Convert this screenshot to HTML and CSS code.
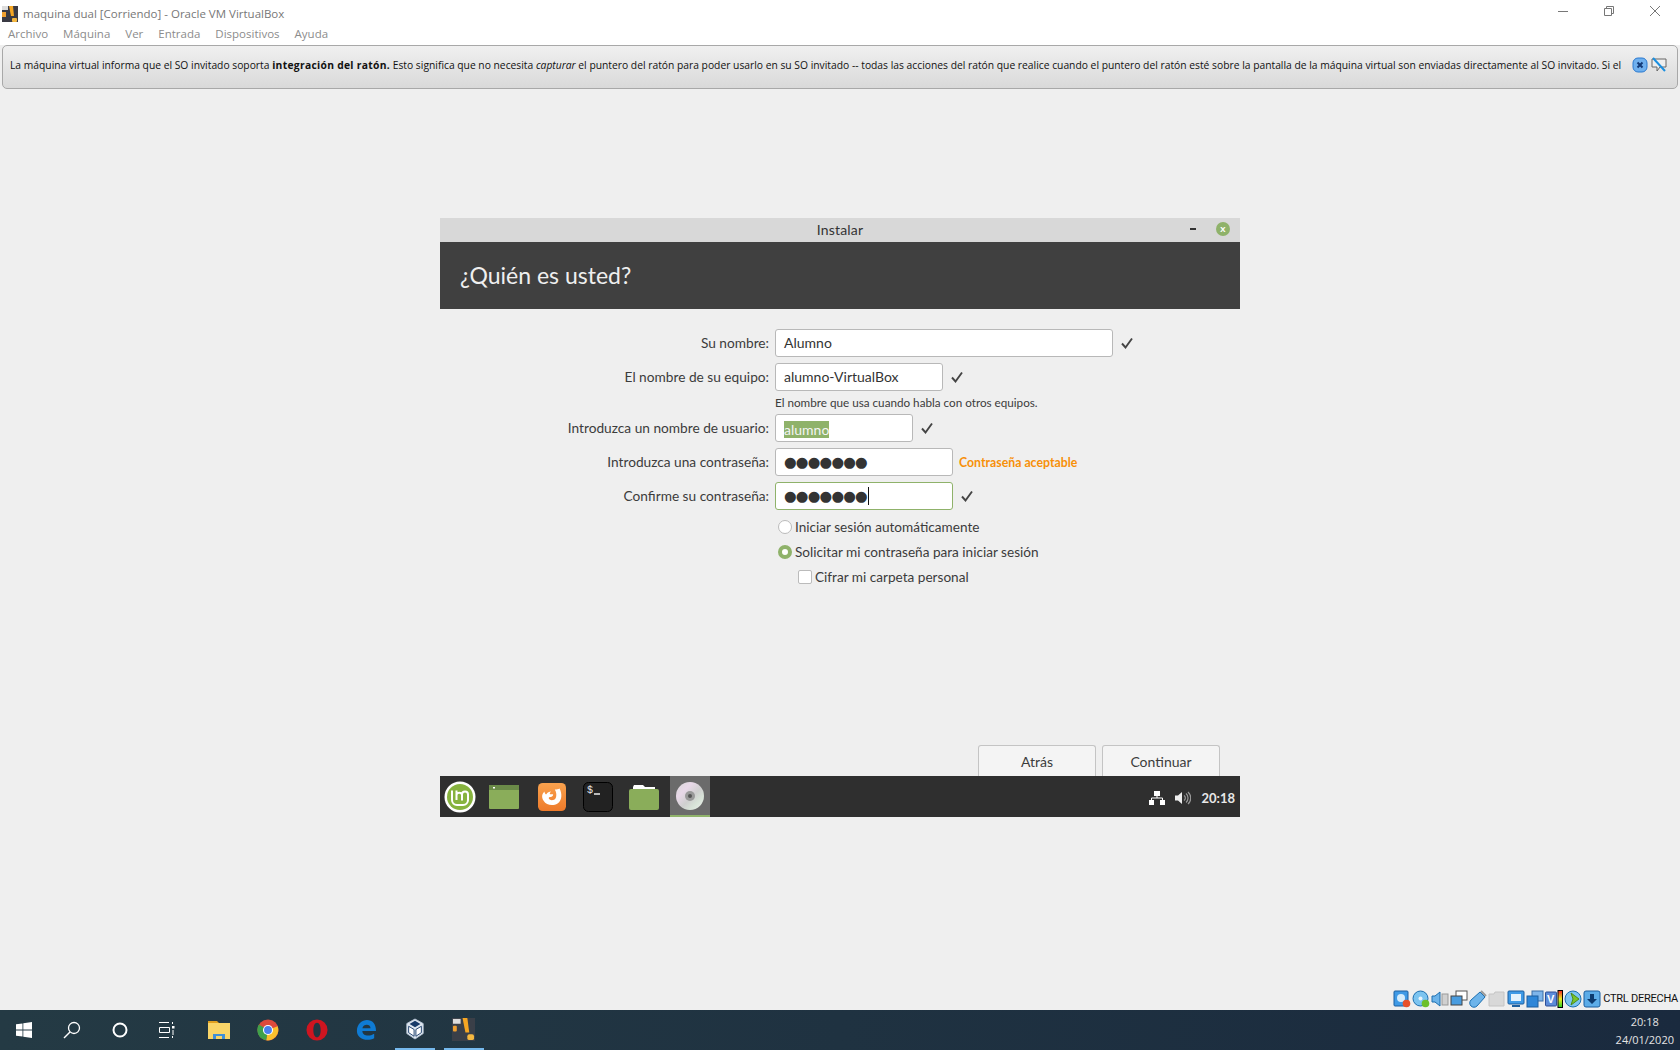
FILE: index.html
```html
<!DOCTYPE html>
<html lang="es">
<head>
  <meta charset="UTF-8" />
  <title>maquina dual [Corriendo] - Oracle VM VirtualBox</title>
  <link rel="stylesheet" href="styles.css">
</head>
<body>
  <div class="titlebar">
    <svg class="app-icon" viewBox="0 0 16 16" width="16" height="16">
      <rect width="16" height="16" fill="#3a3a44"/>
      <rect x="0" y="0" width="6" height="4" fill="#ddd"/>
      <rect x="0" y="6" width="4" height="5" fill="#f0a030"/>
      <path d="M7 0h4l1 10h-3z" fill="#f5a623"/>
      <rect x="10" y="12" width="5" height="4" rx="1" fill="#f5b840"/>
    </svg>
    <span class="app-title">maquina dual [Corriendo] - Oracle VM VirtualBox</span>
    <div class="win-controls">
      <svg viewBox="0 0 46 22" width="46" height="22"><path d="M18 11.5h10" stroke="#777" fill="none"/></svg>
      <svg viewBox="0 0 46 22" width="46" height="22"><path d="M18.5 8.5h7v7h-7zM20.5 8.5v-2h7v7h-2" stroke="#777" fill="none"/></svg>
      <svg viewBox="0 0 46 22" width="46" height="22"><path d="M18 6l10 10M28 6l-10 10" stroke="#777" fill="none"/></svg>
    </div>
  </div>

  <div class="menubar">
    <span>Archivo</span>
    <span>Máquina</span>
    <span>Ver</span>
    <span>Entrada</span>
    <span>Dispositivos</span>
    <span>Ayuda</span>
  </div>

  <div class="notice">
    <p>La máquina virtual informa que el SO invitado soporta <strong>integración del ratón.</strong> Esto significa que no necesita <em>capturar</em> el puntero del ratón para poder usarlo en su SO invitado -- todas las acciones del ratón que realice cuando el puntero del ratón esté sobre la pantalla de la máquina virtual son enviadas directamente al SO invitado. Si el</p>
    <svg viewBox="0 0 16 16" width="16" height="16">
      <rect x="1" y="1" width="14" height="14" rx="5" fill="#6fb0ee" stroke="#2b7ad0"/>
      <path d="M5.5 5.5l5 5M10.5 5.5l-5 5" stroke="#123a78" stroke-width="2"/>
    </svg>
    <svg viewBox="0 0 18 16" width="18" height="16">
      <path d="M2 2h14v8h-6l-3 4v-4h-5z" fill="#eee" stroke="#666"/>
      <path d="M3 1l12 13" stroke="#1a8fe0" stroke-width="2"/>
    </svg>
  </div>

  <main class="desktop">
    <section class="dialog">
      <div class="dialog-title">
        <span>Instalar</span>
        <div class="dialog-controls">
          <i class="minimize"></i>
          <b class="close-btn">x</b>
        </div>
      </div>
      <h1 class="dialog-header">¿Quién es usted?</h1>

      <div class="dialog-body">
        <div class="form">
          <label>Su nombre:</label>
          <div class="field">
            <div class="entry entry-name">Alumno</div>
            <svg class="tick" viewBox="0 0 14 14" width="14" height="14"><path d="M2 7.5l3.5 4L12 2.5" stroke="#444" stroke-width="1.9" fill="none"/></svg>
          </div>

          <label>El nombre de su equipo:</label>
          <div class="field">
            <div class="entry entry-host">alumno-VirtualBox</div>
            <svg class="tick" viewBox="0 0 14 14" width="14" height="14"><path d="M2 7.5l3.5 4L12 2.5" stroke="#444" stroke-width="1.9" fill="none"/></svg>
          </div>

          <p class="hint">El nombre que usa cuando habla con otros equipos.</p>

          <label>Introduzca un nombre de usuario:</label>
          <div class="field">
            <div class="entry entry-user"><span class="selected">alumno</span></div>
            <svg class="tick" viewBox="0 0 14 14" width="14" height="14"><path d="M2 7.5l3.5 4L12 2.5" stroke="#444" stroke-width="1.9" fill="none"/></svg>
          </div>

          <label>Introduzca una contraseña:</label>
          <div class="field">
            <div class="entry entry-pass dots">●●●●●●●</div>
            <span class="strength">Contraseña aceptable</span>
          </div>

          <label>Confirme su contraseña:</label>
          <div class="field">
            <div class="entry entry-pass focused dots">●●●●●●●<span class="caret"></span></div>
            <svg class="tick" viewBox="0 0 14 14" width="14" height="14"><path d="M2 7.5l3.5 4L12 2.5" stroke="#444" stroke-width="1.9" fill="none"/></svg>
          </div>
        </div>

        <div class="options">
          <div class="option"><i class="radio"></i>Iniciar sesión automáticamente</div>
          <div class="option"><i class="radio checked"></i>Solicitar mi contraseña para iniciar sesión</div>
          <div class="option sub"><i class="checkbox"></i>Cifrar mi carpeta personal</div>
        </div>

        <div class="buttons">
          <button>Atrás</button>
          <button>Continuar</button>
        </div>
      </div>

      <div class="panel">
        <div class="launcher">
          <svg viewBox="0 0 32 32" width="32" height="32">
            <circle cx="16" cy="16" r="15.5" fill="#fff"/>
            <circle cx="16" cy="16" r="13" fill="#87b33f"/>
            <path d="M8 9.500v9.500a5 5 0 0 0 5 5h6a5 5 0 0 0 5-5v-5.500a3 3 0 0 0-6 0v6M12.500 9.500v9.500M12.500 13.500a3 3 0 0 1 5.500 0" fill="none" stroke="#fff" stroke-width="2"/>
          </svg>
          <svg viewBox="0 0 30 24" width="30" height="24">
            <rect width="30" height="24" rx="1" fill="#8aad5a"/>
            <rect width="30" height="5" fill="#6b8a48"/>
            <rect x="4" y="2" width="2" height="1.500" fill="#fff"/>
          </svg>
          <svg viewBox="0 0 30 30" width="28" height="28">
            <defs><linearGradient id="ff" x1="0" y1="0" x2="0" y2="1"><stop offset="0" stop-color="#f9a24e"/><stop offset="1" stop-color="#ee7a2a"/></linearGradient></defs>
            <rect width="30" height="30" rx="5" fill="url(#ff)"/>
            <path d="M23 6c3 5 3 13-2 16s-12 2-15-3-1-8 1-10c0 2 1 3 2 3 1-2 3-3 5-3-1 1-2 2-1 3h3c1 1-1 3-3 3s-2 2 0 3 5 0 6-2 1-6-1-9c2 0 4 0 5-1z" fill="#fff"/>
          </svg>
          <svg viewBox="0 0 30 30" width="30" height="30">
            <rect x="0.500" y="0.500" width="29" height="29" rx="5" fill="#222" stroke="#000"/>
            <text x="4" y="11" class="term-text">$</text>
            <path d="M11 12h6" stroke="#eee" stroke-width="1.500"/>
          </svg>
          <svg viewBox="0 0 30 26" width="30" height="26">
            <path d="M4 3l1-2h9l2 2h10v4H4z" fill="#fff"/>
            <rect y="5" width="30" height="21" rx="2" fill="#8aad5a"/>
          </svg>
          <div class="launcher-active">
            <svg viewBox="0 0 28 28" width="28" height="28">
              <defs><linearGradient id="cd" x1="0" y1="0" x2="1" y2="1"><stop offset="0" stop-color="#d8d8d8"/><stop offset="0.3" stop-color="#e8d8e8"/><stop offset="0.55" stop-color="#cfcfcf"/><stop offset="0.75" stop-color="#d8e4d8"/><stop offset="1" stop-color="#eee"/></linearGradient></defs>
              <circle cx="14" cy="14" r="14" fill="url(#cd)"/>
              <circle cx="14" cy="14" r="5" fill="#999"/>
              <circle cx="14" cy="14" r="2" fill="#555"/>
            </svg>
          </div>
        </div>
        <div class="tray">
          <svg viewBox="0 0 16 14" width="16" height="14">
            <path d="M5 0h6v5H5zM0 9h5v5H0zM11 9h5v5h-5z" fill="#fff"/>
            <path d="M8 5v2M2.500 9V7h11v2" stroke="#fff" fill="none"/>
          </svg>
          <svg viewBox="0 0 16 14" width="16" height="14">
            <path d="M0 4.500h3L7 1v12L3 9.500H0z" fill="#eee"/>
            <path d="M9 4.500a3 3 0 0 1 0 5M11 2.500a6 6 0 0 1 0 9M13 1a8 8 0 0 1 0 12" stroke="#999" stroke-width="1.200" fill="none"/>
          </svg>
          <span class="panel-clock">20:18</span>
        </div>
      </div>
    </section>
  </main>

  <div class="statusbar">
    <svg viewBox="0 0 18 18" width="18" height="18"><rect x="1" y="1" width="14" height="15" rx="1" fill="#3f9ae6" stroke="#1d5f9f"/><circle cx="8" cy="8" r="4" fill="#d5ecfb"/><circle cx="13.500" cy="13.500" r="3.800" fill="#e8502a"/></svg>
    <svg viewBox="0 0 18 18" width="18" height="18"><circle cx="8.500" cy="8.500" r="7.500" fill="#7cc4f0" stroke="#1d6fb0"/><circle cx="8.500" cy="8.500" r="2" fill="#e8f4fc"/><circle cx="13.500" cy="13.500" r="3.800" fill="#6cbf2a"/></svg>
    <svg viewBox="0 0 18 18" width="18" height="18"><path d="M1 6h3l5-4v14l-5-4H1z" fill="#6db4ea" stroke="#1d6fb0"/><rect x="11" y="4" width="6" height="11" fill="#d0d0d0" stroke="#999"/></svg>
    <svg viewBox="0 0 18 18" width="18" height="18"><rect x="6" y="1" width="11" height="9" fill="#fff" stroke="#555"/><rect x="1" y="6" width="11" height="9" fill="#4a9de0" stroke="#444"/></svg>
    <svg viewBox="0 0 18 18" width="18" height="18"><path d="M11 2l5 5-8 9a3 3 0 0 1-6-6z" fill="#6db4ea" stroke="#1d6fb0"/><path d="M12 1l5 5" stroke="#999" stroke-width="2"/></svg>
    <svg viewBox="0 0 18 18" width="18" height="18"><path d="M1 4h5l1-2h9v14H1z" fill="#d8d8d8" stroke="#c4c4c4"/></svg>
    <svg viewBox="0 0 18 18" width="18" height="18"><rect x="1" y="1" width="16" height="13" rx="1" fill="#3f9ae6" stroke="#1d5f9f"/><rect x="4" y="4" width="10" height="7" fill="#e4f2fc"/><path d="M5 16h8" stroke="#1d5f9f" stroke-width="2"/></svg>
    <svg viewBox="0 0 18 18" width="18" height="18"><rect x="6" y="1" width="11" height="10" fill="#7fb5ea" stroke="#3a6ea8"/><rect x="1" y="6" width="11" height="11" fill="#2e86d8" stroke="#1d5f9f"/></svg>
    <svg viewBox="0 0 18 18" width="18" height="18">
      <defs><linearGradient id="meter" x1="0" y1="0" x2="0" y2="1"><stop offset="0" stop-color="#e22"/><stop offset="0.5" stop-color="#ee2"/><stop offset="1" stop-color="#2c2"/></linearGradient></defs>
      <rect x="0.500" y="2" width="11" height="14" rx="1" fill="#5c8bd8" stroke="#2c4f96"/>
      <text x="2" y="13" class="vt-text">V</text>
      <rect x="13" y="0.500" width="4.500" height="17" fill="url(#meter)" stroke="#000"/>
    </svg>
    <svg viewBox="0 0 18 18" width="18" height="18"><circle cx="9" cy="9" r="8" fill="#7cc4f0" stroke="#1d6fb0"/><path d="M7 3l8 6-8 6 2-6z" fill="#7cc42a" stroke="#4a8a18"/></svg>
    <svg viewBox="0 0 18 18" width="18" height="18"><rect x="1" y="1" width="16" height="16" rx="2" fill="#5cace8" stroke="#1d5f9f"/><path d="M7 4h4v5h3l-5 5-5-5h3z" fill="#0c3a6e"/></svg>
    <span class="host-key">CTRL DERECHA</span>
  </div>

  <footer class="taskbar">
    <div class="task-item system">
      <svg viewBox="0 0 16 16" width="16" height="16"><path d="M0 2.300l6.500-.9v6.200H0zM7.300 1.300L16 0v7.600H7.300zM0 8.400h6.500v6.200L0 13.700zM7.300 8.400H16V16l-8.700-1.300z" fill="#fff"/></svg>
    </div>
    <div class="task-item system">
      <svg viewBox="0 0 18 18" width="18" height="18"><circle cx="11" cy="7" r="5.500" fill="none" stroke="#fff" stroke-width="1.300"/><path d="M7 11l-6 6" stroke="#fff" stroke-width="1.500"/></svg>
    </div>
    <div class="task-item system">
      <svg viewBox="0 0 16 16" width="16" height="16"><circle cx="8" cy="8" r="6.500" fill="none" stroke="#fff" stroke-width="2"/></svg>
    </div>
    <div class="task-item system">
      <svg viewBox="0 0 18 16" width="18" height="16"><path d="M0 .5h10M0 15.500h10M.5 5.500h10v5H.5zM13.500 0v2M13.500 14v2" stroke="#fff" fill="none"/><rect x="13" y="4" width="2.500" height="2.500" fill="#fff"/><path d="M14 8v5" stroke="#fff"/></svg>
    </div>
    <div class="task-item first-app">
      <svg viewBox="0 0 22 20" width="22" height="20"><path d="M0 1h9l2 2H0z" fill="#e0a020"/><rect y="3" width="22" height="16" fill="#f9d568"/><path d="M5 19v-5h12v5h-3v-3H8v3z" fill="#3f8fd8"/></svg>
    </div>
    <div class="task-item">
      <svg viewBox="0 0 24 24" width="22" height="22"><circle cx="12" cy="12" r="11.500" fill="#dd4a3c"/><path d="M12 12L22.500 8A11.500 11.500 0 0 1 10 23.300z" fill="#fbc02d"/><path d="M12 12L10 23.300A11.500 11.500 0 0 1 2 6z" fill="#3fa14a"/><circle cx="12" cy="12" r="5.500" fill="#fff"/><circle cx="12" cy="12" r="4.300" fill="#4a80ee"/></svg>
    </div>
    <div class="task-item">
      <svg viewBox="0 0 24 24" width="22" height="22"><path d="M12 .5a11.500 11.500 0 1 0 0 23 11.500 11.500 0 0 0 0-23zm0 3.500c2.500 0 4 3.500 4 8s-1.500 8-4 8-4-3.500-4-8 1.500-8 4-8z" fill="#cf1520" fill-rule="evenodd"/></svg>
    </div>
    <div class="task-item">
      <svg viewBox="0 0 22 22" width="20" height="20"><path d="M1 12C1 4 7 0 12 0c6 0 10 4 10 12H7c0 5 7 7 13 3v5c-8 4-19 1-19-8zm6-3h9c0-5-8-5-9 0z" fill="#0f7bd4" fill-rule="evenodd"/></svg>
    </div>
    <div class="task-item active">
      <svg viewBox="0 0 22 24" width="20" height="22"><path d="M11 1l9 5v11l-9 6-9-6V6z" fill="#dfe7f0" stroke="#b6c4d6"/><path d="M11 3l6 3.500-6 3.500-6-3.500z" fill="#173a68"/><path d="M4 9l6 3.500V20l-6-4z" fill="#fff" stroke="#173a68"/><path d="M18 9l-6 3.500V20l6-4z" fill="#fff" stroke="#173a68"/></svg>
    </div>
    <div class="task-item active">
      <svg viewBox="0 0 24 24" width="23" height="23"><rect width="24" height="24" fill="#3a3f48"/><rect x="1" y="1" width="8" height="5" fill="#ddd"/><rect x="1" y="8" width="4" height="6" rx="1" fill="#f0a030"/><path d="M11 0h5l2 15h-4z" fill="#f5a623"/><rect x="16" y="17" width="7" height="6" rx="2" fill="#f5b840"/></svg>
    </div>
    <div class="task-clock">
      <span>20:18</span>
      <span>24/01/2020</span>
    </div>
  </footer>
</body>
</html>
```

FILE: styles.css
```css
* {
  margin: 0;
  padding: 0;
  box-sizing: border-box;
}

html, body {
  height: 100%;
}

body {
  display: flex;
  flex-direction: column;
  height: 1050px;
  overflow: hidden;
  background: #efefef;
  font-family: 'Open Sans', 'Noto Sans', sans-serif;
}

/* VirtualBox window chrome */
.titlebar {
  display: flex;
  align-items: center;
  height: 27px;
  padding: 0 2px;
  background: #fff;
}

.app-title {
  margin-left: 5px;
  font-size: 11.500px;
  color: #777;
}

.win-controls {
  display: flex;
  align-items: center;
  margin-left: auto;
  margin-top: -6px;
}

.menubar {
  display: flex;
  gap: 15px;
  height: 18px;
  padding-left: 8px;
  background: #fff;
  font-size: 11.500px;
  line-height: 14px;
  color: #8c8c8c;
}

.notice {
  display: flex;
  align-items: center;
  gap: 2px;
  height: 44px;
  margin: 0 2px;
  padding: 0 9px 5px 7px;
  border: 1px solid #a8a8a8;
  border-radius: 5px;
  background: linear-gradient(to bottom, #f0f0f0, #d9d9d9);
  font-size: 10.300px;
  color: #111;
}

.notice p {
  flex: 1;
  white-space: nowrap;
}

.notice strong {
  letter-spacing: 0.3px;
}

.notice svg {
  flex-shrink: 0;
}

/* guest screen */
.desktop {
  flex: 1;
  padding: 129px 0 0 440px;
}

.dialog {
  display: flex;
  flex-direction: column;
  width: 800px;
  height: 599px;
  font-family: Lato, 'Noto Sans', sans-serif;
  font-size: 13.700px;
  color: #3c3c3c;
}

.dialog-title {
  position: relative;
  height: 24px;
  background: #d8d8d8;
  text-align: center;
  font-size: 14px;
  letter-spacing: 0.2px;
  line-height: 24px;
  color: #333;
}

.dialog-controls {
  position: absolute;
  top: 0;
  right: 10px;
  display: flex;
  align-items: center;
  gap: 20px;
  height: 22px;
}

.minimize {
  width: 6px;
  height: 2px;
  background: #333;
}

.close-btn {
  width: 14px;
  height: 14px;
  border-radius: 50%;
  background: #8fb26a;
  font-size: 10px;
  line-height: 13px;
  color: #fff;
}

.dialog-header {
  height: 67px;
  padding-left: 20px;
  background: #404040;
  font-size: 23px;
  font-weight: 400;
  line-height: 66px;
  color: #efefef;
}

.dialog-body {
  flex: 1;
  display: flex;
  flex-direction: column;
  padding-top: 20px;
  overflow: hidden;
}

.form {
  display: grid;
  grid-template-columns: 329px 1fr;
  column-gap: 6px;
  row-gap: 6px;
}

.form label {
  text-align: right;
  line-height: 28px;
  white-space: nowrap;
}

.field {
  display: flex;
  align-items: center;
}

.tick {
  margin-left: 7px;
}

.entry {
  height: 28px;
  padding-left: 8px;
  border: 1px solid #b8b8b8;
  border-radius: 3px;
  background: #fff;
  line-height: 26px;
  color: #333;
  font-size: 14px;
}

.entry-name {
  width: 338px;
}

.entry-host {
  width: 168px;
}

.entry-user {
  width: 138px;
}

.entry-pass {
  width: 178px;
}

.dots {
  font-family: 'DejaVu Sans', sans-serif;
  font-size: 14.500px;
  letter-spacing: -0.800px;
}

.focused {
  border-color: #8fb26a;
}

.selected {
  display: inline-block;
  line-height: 17px;
  background: #8fb26a;
  color: #f4f4f4;
  vertical-align: middle;
}

.caret {
  display: inline-block;
  width: 1px;
  height: 18px;
  margin-left: 1px;
  background: #111;
  vertical-align: -4px;
}

.strength {
  margin-left: 6px;
  font-size: 12.300px;
  font-weight: 700;
  color: #f79009;
}

.hint {
  grid-column: 2;
  margin-top: -1px;
  font-size: 11.700px;
  line-height: 12px;
}

.options {
  display: flex;
  flex-direction: column;
  padding: 4px 0 0 338px;
  font-size: 13.600px;
}

.option {
  display: flex;
  align-items: center;
  height: 25px;
  white-space: nowrap;
}

.option.sub {
  padding-left: 20px;
}

.radio, .checkbox {
  flex-shrink: 0;
  width: 14px;
  height: 14px;
  margin-right: 3px;
  border: 1px solid #bbb;
  background: #fff;
}

.radio {
  border-radius: 50%;
}

.radio.checked {
  border: 4.500px solid #8fb26a;
}

.checkbox {
  border-radius: 2px;
}

.buttons {
  display: flex;
  justify-content: flex-end;
  gap: 6px;
  margin-top: auto;
  padding-right: 20px;
}

.buttons button {
  width: 118px;
  height: 31px;
  border: 1px solid #c4c4c4;
  border-bottom: none;
  border-radius: 3px 3px 0 0;
  background: #f4f4f4;
  font: inherit;
  font-size: 14px;
  color: inherit;
}

.panel {
  display: flex;
  align-items: center;
  justify-content: space-between;
  height: 41px;
  background: #2f2f2f;
}

.launcher {
  display: flex;
  align-items: center;
  height: 100%;
  padding-left: 4px;
}

.launcher > svg:nth-child(2) {
  margin-left: 13px;
}

.launcher > svg:nth-child(3) {
  margin-left: 19px;
}

.launcher > svg:nth-child(4) {
  margin-left: 17px;
}

.launcher > svg:nth-child(5) {
  margin-left: 16px;
}

.launcher-active {
  display: flex;
  align-items: center;
  justify-content: center;
  width: 40px;
  height: 100%;
  margin-left: 11px;
  border-bottom: 2px solid #8fb26a;
  background: #6b6b6b;
}

.term-text {
  font-family: 'Liberation Mono', monospace;
  font-size: 10px;
  fill: #eee;
}

.tray {
  display: flex;
  align-items: center;
  gap: 10px;
  padding: 2px 5px 0 0;
}

.panel-clock {
  font-size: 13px;
  font-weight: 700;
  color: #e8e8e8;
}

/* VirtualBox status bar */
.statusbar {
  display: flex;
  align-items: center;
  justify-content: flex-end;
  gap: 1px;
  height: 23px;
  padding-right: 2px;
  background: #efefef;
}

.vt-text {
  font-family: 'Liberation Sans', sans-serif;
  font-size: 11px;
  font-weight: 700;
  fill: #fff;
}

.host-key {
  margin-left: 1px;
  font-family: Roboto, 'Liberation Sans', sans-serif;
  font-size: 11px;
  letter-spacing: -0.25px;
  color: #111;
  white-space: nowrap;
}

/* windows taskbar */
.taskbar {
  display: flex;
  align-items: center;
  height: 40px;
  background: linear-gradient(to right, #243a44, #1a2a3e);
}

.task-item {
  display: flex;
  align-items: center;
  justify-content: center;
  width: 49px;
  height: 100%;
}

.task-item.system {
  width: 48px;
}

.task-item.first-app {
  margin-left: 2px;
}

.task-item.active {
  width: 40px;
  margin: 0 4.500px;
  border-bottom: 2px solid #76b9ed;
}

.task-clock {
  display: flex;
  flex-direction: column;
  gap: 3px;
  margin-left: auto;
  padding-right: 6px;
  text-align: center;
  font-family: 'Open Sans', sans-serif;
  font-size: 11px;
  color: #e4e4e4;
}
```
